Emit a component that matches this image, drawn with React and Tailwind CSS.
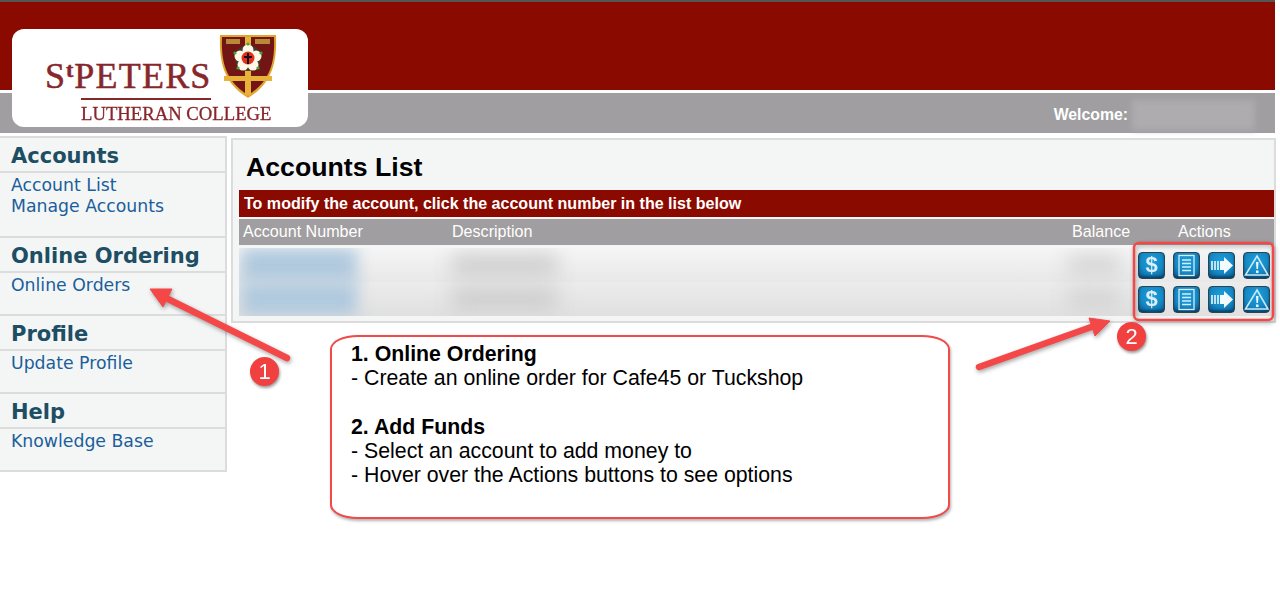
const menu = [
  { title: 'Accounts', links: ['Account List', 'Manage Accounts'], height: 'h-[98px]' },
  { title: 'Online Ordering', links: ['Online Orders'], height: 'h-[78px]' },
  { title: 'Profile', links: ['Update Profile'], height: 'h-[78px]' },
  { title: 'Help', links: ['Knowledge Base'], height: 'h-[78px]' },
];

const Shield = () => (
  <svg width="58" height="66" viewBox="0 0 58 66" className="shrink-0">
    <path d="M1 2 L57 2 C58 28 54 50 29 65 C4 50 0 28 1 2 Z" fill="#e0a52e" />
    <path d="M3 4 L55 4 C56 28 52 48 29 62 C6 48 2 28 3 4 Z" fill="#741515" />
    <rect x="26" y="4" width="6" height="58" fill="#e8b23a" />
    <rect x="5" y="43" width="48" height="5" fill="#e8b23a" />
    <rect x="7" y="6" width="14" height="5" fill="#b98a35" />
    <rect x="36" y="6" width="15" height="5" fill="#b98a35" />
    <circle cx="29" cy="25" r="13" fill="#3c3c2a" />
    <g fill="#fff8e8">
      <circle cx="29" cy="17" r="5.5" />
      <circle cx="37" cy="23" r="5.5" />
      <circle cx="34" cy="32" r="5.5" />
      <circle cx="24" cy="32" r="5.5" />
      <circle cx="21" cy="23" r="5.5" />
    </g>
    <circle cx="29" cy="25" r="6.5" fill="#e3301e" />
    <path d="M28 20h2v3h3v2h-3v6h-2v-6h-3v-2h3z" fill="#111" />
    <g fill="#3aa83a">
      <circle cx="29" cy="11" r="1.6" />
      <circle cx="42" cy="20" r="1.6" />
      <circle cx="39" cy="35" r="1.6" />
      <circle cx="19" cy="35" r="1.6" />
      <circle cx="16" cy="20" r="1.6" />
    </g>
  </svg>
);

const Logo = () => (
  <div className="absolute left-[12px] top-[29px] w-[296px] h-[98px] bg-white rounded-[12px] font-['Liberation_Serif',serif] text-[#87272b] blur-[0.4px]">
    <div className="flex pl-[33px] pt-[4px]">
      <div className="w-[174px] pt-[24px]">
        <div className="flex items-start h-[39px] leading-[39px] text-[36px] [-webkit-text-stroke:0.5px_#87272b]">
          <span>S</span>
          <span className="text-[22px] leading-[26px] ml-[1px] mr-[1px] font-bold">t</span>
          <span className="tracking-[1.2px]">PETERS</span>
        </div>
        <div className="ml-[36px] mt-[2px] w-[130px] h-[2px] bg-[#87272b]" />
      </div>
      <Shield />
    </div>
    <div className="pl-[69px] mt-[3px] text-[18.7px] leading-[22px] whitespace-nowrap [-webkit-text-stroke:0.3px_#87272b]">LUTHERAN COLLEGE</div>
  </div>
);

const Sidebar = () => (
  <div className="w-[227px] h-[336px] shrink-0 bg-[#f4f6f6] border-t-2 border-r-2 border-b-2 border-[#dcdcdc] font-['DejaVu_Sans',sans-serif]">
    {menu.map((section, i) => (
      <div key={section.title} className={`${section.height} ${i > 0 ? 'border-t-2 border-[#dcdcdc]' : ''}`}>
        <div className="h-[35px] border-b-2 border-[#dcdcdc] pl-[11px] text-[21px] leading-[36px] font-bold text-[#1d4e63]">
          {section.title}
        </div>
        <div className="pl-[11px] pt-[2px]">
          {section.links.map((link) => (
            <div key={link} className="text-[17.3px] leading-[21px] text-[#1b5e9b]">{link}</div>
          ))}
        </div>
      </div>
    ))}
  </div>
);

const BlueButton = ({ children }) => (
  <div className="w-[27px] h-[27px] rounded-[4px] border border-[#2b4452] bg-[radial-gradient(circle_at_50%_35%,#1c9fdc_0%,#1488c4_55%,#0a5485_100%)] shadow-[inset_0_-2px_2px_rgba(0,30,60,0.45)] flex items-center justify-center blur-[0.3px]">
    {children}
  </div>
);

const ActionIcons = () => (
  <div className="flex gap-[8px]">
    <BlueButton>
      <span className="font-['Liberation_Sans',sans-serif] font-bold text-[22px] leading-none text-[#dceef8]">$</span>
    </BlueButton>
    <BlueButton>
      <svg width="19" height="23" viewBox="0 0 19 23" fill="none" stroke="#d5edf9">
        <rect x="2" y="1.5" width="15" height="20" strokeWidth="1.3" />
        <path d="M5 6h9M5 9.5h9M5 13h9M5 16.5h9" strokeWidth="1.4" />
      </svg>
    </BlueButton>
    <BlueButton>
      <svg width="25" height="19" viewBox="0 0 25 19">
        <path d="M2 5h2v9H2zM5 5h2v9H5zM8 5h2v9H8z" fill="#bfe3f5" />
        <path d="M11 5h4V1l9 8.5-9 8.500v-4h-4z" fill="#f2fafe" />
      </svg>
    </BlueButton>
    <BlueButton>
      <svg width="25" height="23" viewBox="0 0 25 23">
        <path d="M13 2 L24 21 H1.500 Z" fill="none" stroke="#cbe8f7" strokeWidth="1.6" />
        <path d="M12 8h2.500l-.5 7h-1.500zM12 16.500h2.500V19H12z" fill="#f2fafe" />
      </svg>
    </BlueButton>
  </div>
);

const Row = ({ shade }) => (
  <div className={`h-[34px] flex items-center ${shade}`}>
    <div className="w-[211px] shrink-0 pl-[2px]">
      <div className="w-[116px] h-[34px] bg-[#b0c9de] blur-[8px]" />
    </div>
    <div className="flex-1 pl-[2px]">
      <div className="w-[105px] h-[20px] bg-[#cbcbcb] blur-[10px]" />
    </div>
    <div className="w-[60px] mr-[10px]">
      <div className="w-[52px] h-[16px] bg-[#cfcfcf] blur-[10px]" />
    </div>
    <ActionIcons />
    <div className="w-[4px]" />
  </div>
);

const AccountsPanel = () => (
  <div className="ml-[4px] mt-[2px] w-[1045px] h-[185px] bg-[#f4f6f6] border-2 border-[#dcdcdc] pl-[6px]">
    <h1 className="pl-[7px] pt-[11px] h-[50px] text-[26.7px] leading-[32px] font-bold text-black">Accounts List</h1>
    <div className="h-[27px] bg-[#8b0a00] pl-[5px] text-[16.06px] leading-[27px] font-bold text-white">
      To modify the account, click the account number in the list below
    </div>
    <div className="mt-[2px] h-[26px] bg-[#a09ea0] flex text-[16.1px] leading-[25px] text-white">
      <div className="w-[213px] pl-[4px]">Account Number</div>
      <div className="flex-1">Description</div>
      <div className="w-[106px]">Balance</div>
      <div className="w-[96px]">Actions</div>
    </div>
    <div className="mt-[3px] overflow-hidden">
      <Row shade="bg-linear-to-b from-[#f5f5f5] to-[#e8e8e8]" />
      <Row shade="bg-linear-to-b from-[#ececec] to-[#e0e0e0]" />
    </div>
  </div>
);

const Callout = () => (
  <div className="absolute left-[330px] top-[335px] w-[620px] h-[184px] bg-white border-2 border-[#f04a4a] rounded-[28px/14px] shadow-[1px_2px_3px_rgba(0,0,0,0.3)] pl-[19px] pt-[5px] text-[21.3px] leading-[24.3px] text-black">
    <div className="font-bold">1. Online Ordering</div>
    <div>- Create an online order for Cafe45 or Tuckshop</div>
    <div className="h-[24.3px]" />
    <div className="font-bold">2. Add Funds</div>
    <div>- Select an account to add money to</div>
    <div>- Hover over the Actions buttons to see options</div>
  </div>
);

const Badge = ({ n, className }) => (
  <div className={`absolute w-[29px] h-[29px] rounded-full bg-[#f04040] shadow-[1px_2px_3px_rgba(0,0,0,0.4)] text-white text-[22px] leading-[29px] text-center ${className}`}>
    {n}
  </div>
);

// hand-drawn arrows over the screenshot
const Arrows = () => (
  <svg className="absolute left-0 top-0 pointer-events-none drop-shadow-[1px_2px_2px_rgba(0,0,0,0.35)]" width="1280" height="592" fill="#f44848" stroke="#f44848">
    <path d="M287 358 L166 298" strokeWidth="6.5" strokeLinecap="round" fill="none" />
    <path d="M150 289 L172 289 L163 307 Z" strokeWidth="1" />
    <path d="M979 367 L1094 326" strokeWidth="6.5" strokeLinecap="round" fill="none" />
    <path d="M1110 321 L1089 318 L1095 336 Z" strokeWidth="1" />
    <rect x="1134" y="243" width="139" height="77" rx="5" fill="none" strokeWidth="2.5" />
  </svg>
);

export default function App() {
  return (
    <div className="relative w-[1280px] h-[592px] overflow-hidden bg-white font-['Liberation_Sans',Arial,sans-serif]">
      {/* Header */}
      <div className="w-[1275px]">
        <div className="h-[2px] bg-[#555555]" />
        <div className="h-[88px] bg-[#8b0a00]" />
        <div className="h-[3px] bg-white" />
        <div className="h-[40px] bg-[#a09ea0] flex items-center justify-end pr-[20px] pt-[3px]">
          <span className="text-[15.8px] font-bold text-white mr-[4px]">Welcome:</span>
          <div className="w-[123px] h-[30px] bg-[#aeacae] blur-[3px]" />
        </div>
      </div>
      <Logo />

      {/* Body */}
      <div className="flex pt-[3px]">
        <Sidebar />
        <AccountsPanel />
      </div>

      <Callout />
      <Arrows />
      <Badge n="1" className="left-[250px] top-[357px]" />
      <Badge n="2" className="left-[1117px] top-[322px]" />
    </div>
  );
}
